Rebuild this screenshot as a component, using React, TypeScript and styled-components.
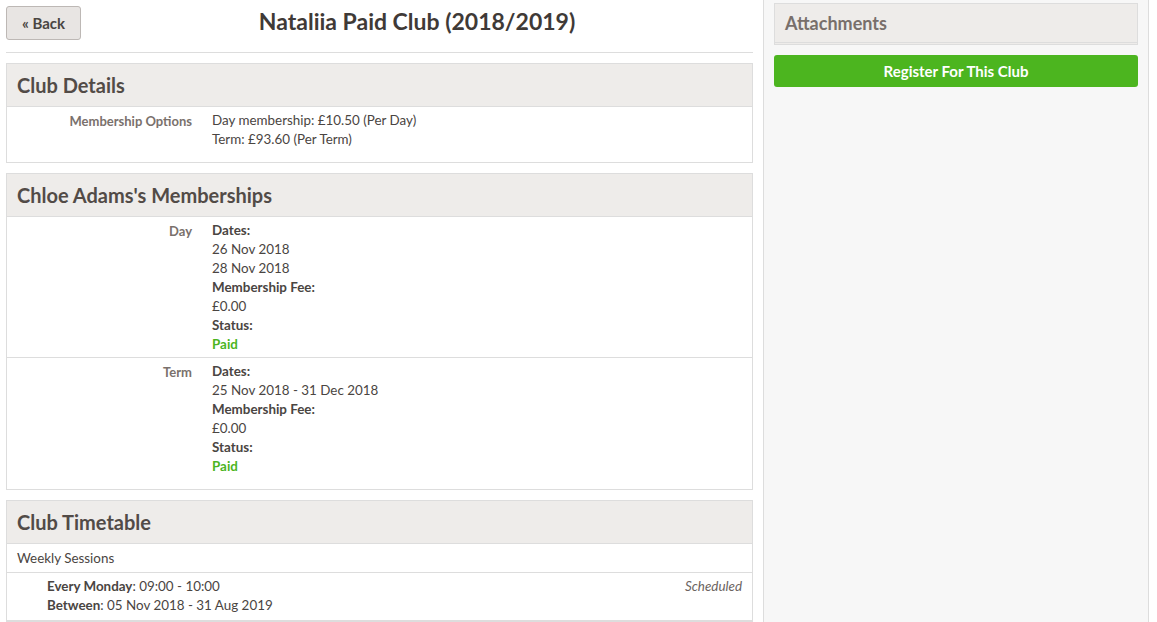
import styled, { createGlobalStyle } from "styled-components";

const GlobalStyle = createGlobalStyle`
    html, body {
        margin: 0;
        padding: 0;
        background: #ffffff;
        font-family: Lato, "Open Sans", sans-serif;
        color: #4a4542;
    }
`;

const Page = styled.div`
    display: flex;
    width: 1157px;
    height: 622px;
    overflow: hidden;
`;

const Main = styled.div`
    width: 747px;
    margin-left: 6px;
    flex-shrink: 0;
`;

const Sidebar = styled.div`
    width: 364px;
    margin-left: 10px;
    padding: 3px 10px 0;
    background: #f7f7f7;
    border-left: 1px solid #dddddd;
    border-right: 1px solid #dddddd;
    box-sizing: content-box;
`;

const TopBar = styled.div`
    display: flex;
    align-items: flex-start;
    height: 53px;
    border-bottom: 1px solid #dddddd;
    box-sizing: border-box;
`;

const BackButton = styled.button`
    width: 75px;
    height: 34px;
    margin-top: 6px;
    background: #e8e5e3;
    border: 1px solid #bdb8b5;
    border-radius: 3px;
    font-family: inherit;
    font-weight: 700;
    font-size: 15px;
    color: #4a4542;
    padding: 0;
`;

const Title = styled.h1`
    flex: 1;
    margin: 6px 0 0;
    line-height: 30px;
    text-align: center;
    font-size: 23px;
    font-weight: 700;
    color: #3f3a37;
`;

const Panel = styled.section`
    margin-top: 10px;
    border: 1px solid #dddddd;
    background: #ffffff;
`;

const PanelHeader = styled.div`
    height: 42px;
    display: flex;
    align-items: center;
    padding: 0 10px;
    background: #eeecea;
    border-bottom: 1px solid #dddddd;
    font-size: 20px;
    font-weight: 700;
    color: #524b47;
`;

const DetailRow = styled.div<{ last?: boolean }>`
    display: grid;
    grid-template-columns: 185px 1fr;
    column-gap: 20px;
    padding: 4px 0 ${(p) => (p.last ? "13px" : "3px")};
    border-bottom: ${(p) => (p.last ? "none" : "1px solid #dddddd")};
    font-size: 13.4px;
    line-height: 19px;
`;

const Label = styled.div`
    text-align: right;
    font-size: 13px;
    font-weight: 700;
    color: #7a716c;
    padding-top: 1px;
`;

const Value = styled.div`
    color: #4a4542;
`;

const Strong = styled.div`
    font-weight: 700;
`;

const Paid = styled.div`
    font-weight: 700;
    color: #4cb51f;
`;

const SubHeading = styled.div`
    padding: 5px 10px;
    font-size: 13.4px;
    line-height: 18px;
    border-bottom: 1px solid #dddddd;
`;

const Session = styled.div`
    display: flex;
    justify-content: space-between;
    padding: 4px 10px 5px 40px;
    font-size: 13.4px;
    line-height: 19px;
    border-bottom: 1px solid #dddddd;
`;

const Muted = styled.span`
    font-style: italic;
    color: #6b6360;
`;

const SideHeader = styled.div`
    height: 38px;
    display: flex;
    align-items: center;
    padding: 0 10px;
    background: #eeecea;
    border: 1px solid #dddddd;
    border-bottom: 3px double #dddddd;
    font-size: 18px;
    font-weight: 700;
    color: #786f6b;
`;

const RegisterButton = styled.button`
    width: 100%;
    height: 32px;
    margin-top: 10px;
    background: #4cb51f;
    color: #ffffff;
    border: none;
    border-radius: 3px;
    font-family: inherit;
    font-size: 15px;
    font-weight: 700;
`;

export default function App() {
    return (
        <Page>
            <GlobalStyle />
            <Main>
                <TopBar>
                    <BackButton>« Back</BackButton>
                    <Title>Nataliia Paid Club (2018/2019)</Title>
                </TopBar>
                <Panel>
                    <PanelHeader>Club Details</PanelHeader>
                    <DetailRow last>
                        <Label>Membership Options</Label>
                        <Value>
                            Day membership: £10.50 (Per Day)
                            <br />
                            Term: £93.60 (Per Term)
                        </Value>
                    </DetailRow>
                </Panel>
                <Panel>
                    <PanelHeader>Chloe Adams's Memberships</PanelHeader>
                    <DetailRow>
                        <Label>Day</Label>
                        <Value>
                            <Strong>Dates:</Strong>
                            <div>26 Nov 2018</div>
                            <div>28 Nov 2018</div>
                            <Strong>Membership Fee:</Strong>
                            <div>£0.00</div>
                            <Strong>Status:</Strong>
                            <Paid>Paid</Paid>
                        </Value>
                    </DetailRow>
                    <DetailRow last>
                        <Label>Term</Label>
                        <Value>
                            <Strong>Dates:</Strong>
                            <div>25 Nov 2018 - 31 Dec 2018</div>
                            <Strong>Membership Fee:</Strong>
                            <div>£0.00</div>
                            <Strong>Status:</Strong>
                            <Paid>Paid</Paid>
                        </Value>
                    </DetailRow>
                </Panel>
                <Panel>
                    <PanelHeader>Club Timetable</PanelHeader>
                    <SubHeading>Weekly Sessions</SubHeading>
                    <Session>
                        <div>
                            <div>
                                <b>Every Monday</b>: 09:00 - 10:00
                            </div>
                            <div>
                                <b>Between</b>: 05 Nov 2018 - 31 Aug 2019
                            </div>
                        </div>
                        <Muted>Scheduled</Muted>
                    </Session>
                </Panel>
            </Main>
            <Sidebar>
                <SideHeader>Attachments</SideHeader>
                <RegisterButton>Register For This Club</RegisterButton>
            </Sidebar>
        </Page>
    );
}
